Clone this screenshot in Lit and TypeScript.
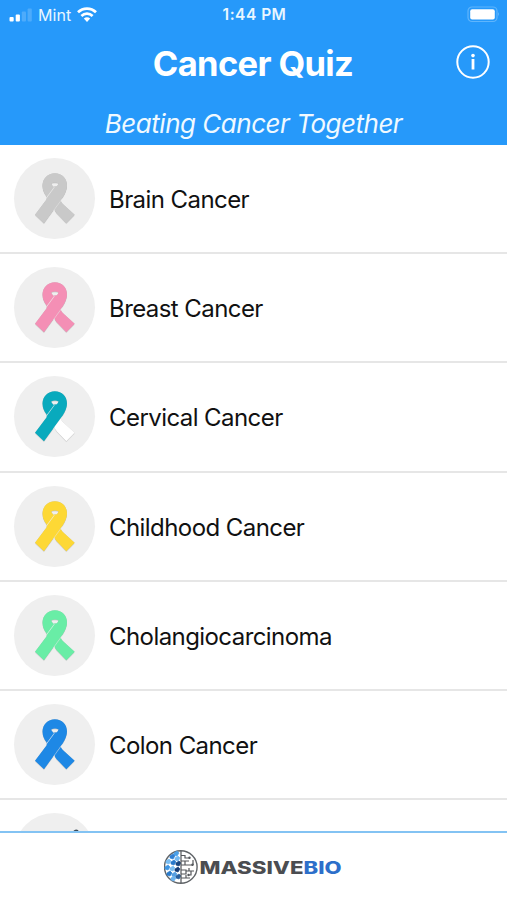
import { LitElement, html, css, svg, nothing } from "lit";
import { customElement, property } from "lit/decorators.js";

interface Topic {
  name: string;
  color: string;
  tail?: string;
}

const TOPICS: Topic[] = [
  { name: "Brain Cancer", color: "#c9c9c9" },
  { name: "Breast Cancer", color: "#f48fb5" },
  { name: "Cervical Cancer", color: "#09aabd", tail: "#ffffff" },
  { name: "Childhood Cancer", color: "#fdd835" },
  { name: "Cholangiocarcinoma", color: "#69eda6" },
  { name: "Colon Cancer", color: "#1e88e5" },
  { name: "", color: "" },
];

@customElement("ribbon-badge")
export class RibbonBadge extends LitElement {
  @property() color = "";
  @property() tail = "";

  static styles = css`
    :host {
      display: block;
      flex: none;
      width: 81px;
      height: 81px;
      border-radius: 50%;
      background: #efefef;
    }
    .art {
      display: block;
      width: 81px;
      height: 81px;
    }
    .shade {
      filter: drop-shadow(0 1px 1px rgba(0, 0, 0, 0.28));
    }
  `;

  render() {
    if (!this.color) {
      return html`<svg class="art" viewBox="0 0 81 81">
        <path d="M59 18.5Q61 15.5 64 17L65 19Z" fill="#3b4a56" />
      </svg>`;
    }
    return html`<svg class="art" viewBox="-48 -31.5 243 243">
      <g class="shade">
        <path fill=${this.tail} d="M73 121 L92 97 Q95 104 101 109 L134 139 L109 164 L80 134 Q74 128 73 121Z" />
        <path
          fill=${this.color}
          fill-rule="evenodd"
          d="M50 84 Q38 70 37.5 51 C38 29 54 14 74.5 14 C96 14 111 29 111 51 Q111 67 98 87 L42 164 L15 139 L50 92Z
             M63 46 Q74 39 86 45 L81 53 L70 55Z"
        />
      </g>
      <path d="M48 90 L73 56" fill="none" stroke="#efefef" stroke-opacity="0.85" stroke-width="2.4" />
      <path d="M70 127 L97 90" fill="none" stroke="#fff" stroke-opacity="0.5" stroke-width="2" />
    </svg>`;
  }
}

@customElement("status-bar")
export class StatusBar extends LitElement {
  static styles = css`
    :host {
      display: grid;
      grid-template-columns: 1fr auto 1fr;
      align-items: center;
      height: 30px;
      padding: 0 7px 0 9px;
      color: #e9f6ff;
      font: 400 16px/30px Inter, sans-serif;
    }
    .left {
      display: flex;
      align-items: center;
    }
    .bars {
      width: 23px;
      height: 14px;
      margin-right: 6px;
    }
    .wifi {
      width: 20px;
      height: 15px;
      margin: -1px 0 0 6px;
    }
    .carrier {
      letter-spacing: 0.1px;
    }
    .time {
      font-weight: 600;
      font-size: 15.5px;
      letter-spacing: 0.5px;
    }
    .battery {
      justify-self: end;
      width: 33px;
      height: 17px;
      margin-top: -2px;
    }
  `;

  render() {
    return html`
      <div class="left">
        <svg class="bars" viewBox="0 0 23 14">
          <rect x="0.5" y="9" width="4.2" height="4.5" rx="1" fill="#fff" />
          <rect x="6.7" y="6.5" width="4.2" height="7" rx="1" fill="#fff" />
          <rect x="12.8" y="3.5" width="4.2" height="10" rx="1" fill="#4dabfb" />
          <rect x="18.6" y="0.5" width="4.2" height="13" rx="1" fill="#4dabfb" />
        </svg>
        <span class="carrier">Mint</span>
        <svg class="wifi" viewBox="0 0 20 15">
          <g fill="none" stroke="#fff" stroke-width="2.7">
            <path d="M1 5.3 C6 0.3 14 0.3 19 5.3" />
            <path d="M4.4 9 C7.6 5.9 12.4 5.9 15.6 9" />
          </g>
          <path fill="#fff" d="M6.8 11.6 Q10 8.8 13.2 11.6 L10 14.9Z" />
        </svg>
      </div>
      <span class="time">1:44 PM</span>
      <svg class="battery" viewBox="0 0 33 17">
        <rect x="1" y="1" width="29" height="14.5" rx="4" fill="none" stroke="#5fb5fc" stroke-width="1.2" />
        <rect x="3.2" y="3.2" width="24.6" height="10.2" rx="2" fill="#fff" />
        <path d="M31.3 6 Q33 8.2 31.3 10.5Z" fill="#79c2ff" />
      </svg>
    `;
  }
}

@customElement("brand-logo")
export class BrandLogo extends LitElement {
  static styles = css`
    :host {
      display: block;
      width: 180px;
      height: 36px;
    }
    .logo {
      display: block;
      width: 180px;
      height: 36px;
    }
    .word {
      font: 800 17px Inter, sans-serif;
    }
  `;

  render() {
    const cells = [
      [12, 4, "#4ba0e8"], [8, 7, "#2e7ed2"], [13, 9, "#74b9f2"], [4, 12, "#79bdf3"],
      [9, 13, "#2878ca"], [14, 14, "#19457f"], [3, 18, "#3e95e2"], [8, 19, "#78bcf1"],
      [13, 20, "#153b74"], [5, 24, "#2a7bcc"], [10, 25, "#569fe2"], [14, 27, "#285f9e"],
      [9, 29, "#6db2ed"],
    ] as const;
    return html`<svg class="logo" viewBox="0 0 180 36">
      <circle cx="16.8" cy="18" r="16.3" fill="#fff" stroke="#606468" stroke-width="1.4" />
      ${cells.map(
        ([x, y, c]) => svg`<path d="M${x - 2} ${y}l3-2 2 2-2 3-3-1z" fill=${c} stroke=${c} stroke-width="0.7" />`
      )}
      <g fill="none" stroke="#54575b" stroke-width="1.2">
        <path d="M17 2V34M17 6.5h4v2.5h5M17 12h8M21 12v4h-4M21 16h8M29 11v5M17 21h5v4h-5M22 22h8M25 19v3M27 22v4h-3M17 29h5v-3M22 29h4" />
      </g>
      <g fill="#54575b">
        <circle cx="25.5" cy="8.8" r="1.2" />
        <circle cx="28.5" cy="15.7" r="1.2" />
        <circle cx="24.5" cy="26" r="1.2" />
      </g>
      <text class="word" x="35.5" y="24.5" fill="#4b4d51" textLength="104" lengthAdjust="spacingAndGlyphs">MASSIVE</text>
      <text class="word" x="139.5" y="24.5" fill="#2d6fca" textLength="38" lengthAdjust="spacingAndGlyphs">BIO</text>
    </svg>`;
  }
}

@customElement("app-root")
export class AppRoot extends LitElement {
  static styles = css`
    :host {
      display: flex;
      flex-direction: column;
      height: 900px;
      overflow: hidden;
      background: #fff;
      font-family: Inter, sans-serif;
    }
    .header {
      flex: none;
      height: 145px;
      background: #2699fa;
      color: #fff;
    }
    .bar {
      display: grid;
      grid-template-columns: 1fr auto 1fr;
      align-items: center;
      height: 67px;
      padding: 0 17px 0 16px;
    }
    .title {
      grid-column: 2;
      margin: 0;
      font-size: 34.5px;
      font-weight: 700;
      letter-spacing: -0.65px;
      line-height: 67px;
    }
    .info {
      justify-self: end;
      width: 34px;
      height: 34px;
      margin-top: -3px;
    }
    .tagline {
      margin: 0;
      font-size: 26px;
      font-style: italic;
      letter-spacing: -0.49px;
      line-height: 54px;
      text-align: center;
      color: #f0f9ff;
    }
    .list {
      flex: 1;
      min-height: 0;
      margin: 0;
      padding: 0;
      overflow: hidden;
      list-style: none;
    }
    .row {
      display: flex;
      align-items: center;
      gap: 14px;
      box-sizing: border-box;
      height: 109.2px;
      padding: 0 14px;
      border-bottom: 2px solid #e6e6e6;
    }
    .name {
      padding-top: 2px;
      font-size: 24px;
      letter-spacing: -0.57px;
      color: #111;
    }
    .footer {
      flex: none;
      display: flex;
      justify-content: center;
      box-sizing: border-box;
      height: 69px;
      padding-top: 16px;
      border-top: 2px solid #83c3f3;
    }
  `;

  render() {
    return html`
      <header class="header">
        <status-bar></status-bar>
        <div class="bar">
          <h1 class="title">Cancer Quiz</h1>
          <svg class="info" viewBox="0 0 34 34">
            <circle cx="17" cy="17" r="15.7" fill="none" stroke="#fff" stroke-width="2" />
            <circle cx="17" cy="10.6" r="1.8" fill="#fff" />
            <path d="M17 14V24.5" stroke="#fff" stroke-width="2.8" />
          </svg>
        </div>
        <p class="tagline">Beating Cancer Together</p>
      </header>
      <ul class="list">
        ${TOPICS.map(
          (t) => html`<li class="row">
            <ribbon-badge .color=${t.color} .tail=${t.tail ?? t.color}></ribbon-badge>
            ${t.name ? html`<span class="name">${t.name}</span>` : nothing}
          </li>`
        )}
      </ul>
      <footer class="footer"><brand-logo></brand-logo></footer>
    `;
  }
}
